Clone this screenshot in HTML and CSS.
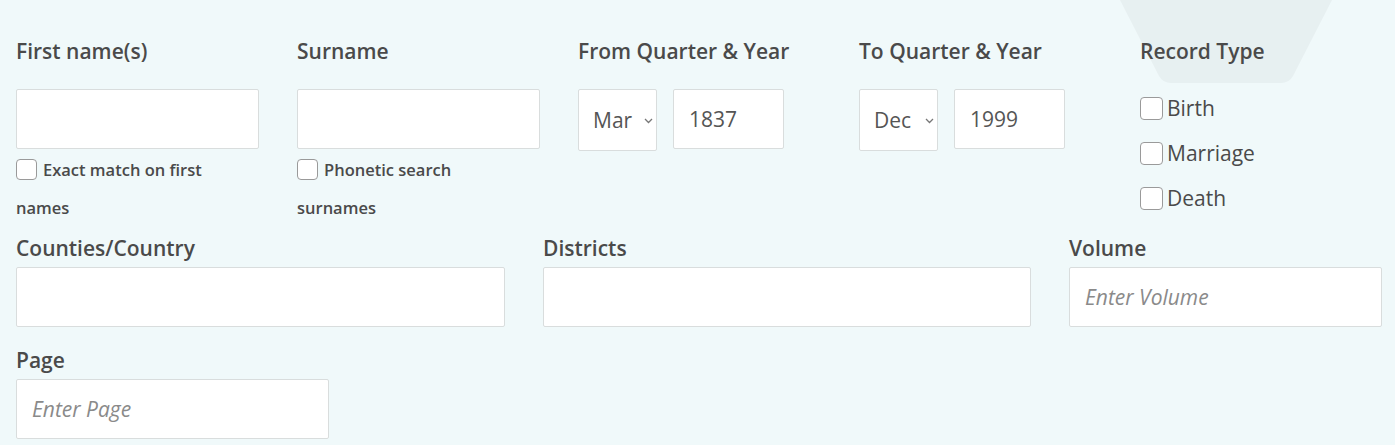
FILE: index.html
```html
<!DOCTYPE html>
<html lang="en">
<head>
    <meta charset="UTF-8">
    <title>Search the Index</title>
    <link rel="stylesheet" href="styles.css">
</head>
<body>
    <svg class="tab" width="212" height="84" viewBox="0 0 212 84">
        <path d="M0 0 H212 L173 76 Q169 83 161 83 H51 Q43 83 39 76 Z" fill="#e7f0f1"/>
    </svg>
    <form class="search">
        <div class="row row-top">
            <div class="field">
                <label class="title" for="forename">First name(s)</label>
                <input type="text" id="forename" class="box">
                <label class="check small"><input type="checkbox">Exact match on first names</label>
            </div>
            <div class="field">
                <label class="title" for="surname">Surname</label>
                <input type="text" id="surname" class="box">
                <label class="check small"><input type="checkbox">Phonetic search surnames</label>
            </div>
            <div class="field">
                <label class="title">From Quarter &amp; Year</label>
                <div class="pair">
                    <div class="pick">
                        <select class="box quarter"><option>Mar</option><option>Jun</option><option>Sep</option><option>Dec</option></select>
                        <svg class="chev" width="9" height="6" viewBox="0 0 9 6"><path d="M1 1 L4.5 4.5 L8 1" fill="none" stroke="#777" stroke-width="1.3"/></svg>
                    </div>
                    <input type="text" class="box year" value="1837">
                </div>
            </div>
            <div class="field">
                <label class="title">To Quarter &amp; Year</label>
                <div class="pair">
                    <div class="pick">
                        <select class="box quarter"><option>Dec</option><option>Mar</option><option>Jun</option><option>Sep</option></select>
                        <svg class="chev" width="9" height="6" viewBox="0 0 9 6"><path d="M1 1 L4.5 4.5 L8 1" fill="none" stroke="#777" stroke-width="1.3"/></svg>
                    </div>
                    <input type="text" class="box year" value="1999">
                </div>
            </div>
            <div class="field">
                <label class="title">Record Type</label>
                <div class="types">
                    <label class="check big"><input type="checkbox">Birth</label>
                    <label class="check big"><input type="checkbox">Marriage</label>
                    <label class="check big"><input type="checkbox">Death</label>
                </div>
            </div>
        </div>
        <div class="row row-mid">
            <div class="field">
                <label class="title" for="county">Counties/Country</label>
                <input type="text" id="county" class="box">
            </div>
            <div class="field">
                <label class="title" for="district">Districts</label>
                <input type="text" id="district" class="box">
            </div>
            <div class="field">
                <label class="title" for="volume">Volume</label>
                <input type="text" id="volume" class="box" placeholder="Enter Volume">
            </div>
        </div>
        <div class="row row-page">
            <div class="field">
                <label class="title" for="page">Page</label>
                <input type="text" id="page" class="box" placeholder="Enter Page">
            </div>
        </div>
    </form>
</body>
</html>
```

FILE: styles.css
```css
body {
    margin: 0;
    background-color: #f0f9fa;
    font-family: "Open Sans", "Noto Sans", sans-serif;
    color: #4a4a4a;
    position: relative;
}

.tab {
    position: absolute;
    left: 1120px;
    top: 0;
    z-index: 0;
}

.search {
    position: relative;
    z-index: 1;
    padding: 36px 0 0 16px;
}

.row {
    display: grid;
    column-gap: 38px;
}

.row-top {
    grid-template-columns: repeat(5, 243px);
}

.row-mid {
    grid-template-columns: 489px 488px 313px;
    margin-top: 6px;
}

.row-page {
    grid-template-columns: 313px;
    margin-top: 18px;
}

.field {
    display: flex;
    flex-direction: column;
    align-items: flex-start;
}

.title {
    display: block;
    font-size: 21px;
    font-weight: 600;
    line-height: 30px;
    margin-bottom: 4px;
}

.row-top .title {
    margin-bottom: 23px;
}

.box {
    box-sizing: border-box;
    width: 100%;
    height: 60px;
    margin: 0;
    background: #fff;
    border: 1px solid #d9dddd;
    border-radius: 2px;
    padding: 0 15px;
    font-family: inherit;
    font-size: 21px;
    color: #555;
    outline: none;
}

.box::placeholder {
    font-style: italic;
    color: #8a8a8a;
}

.pair {
    display: flex;
    gap: 16px;
    align-items: flex-start;
}

.pick {
    position: relative;
}

.quarter {
    -webkit-appearance: none;
    appearance: none;
    width: 79px;
    height: 62px;
    padding: 0 0 0 14px;
}

.chev {
    position: absolute;
    left: 66px;
    top: 29px;
    pointer-events: none;
}

.year {
    width: 111px;
}

.check {
    display: block;
    color: #4a4a4a;
}

.check input {
    -webkit-appearance: none;
    appearance: none;
    box-sizing: border-box;
    margin: 0 6px 0 0;
    background: #fff;
    border: 1.5px solid #9a9a9a;
    border-radius: 4px;
    vertical-align: middle;
    position: relative;
    top: -2px;
}

.small {
    font-size: 16.5px;
    font-weight: 600;
    line-height: 38px;
    width: 230px;
    margin-top: 2px;
}

.small input {
    width: 21px;
    height: 21px;
}

.types {
    margin-top: -3px;
}

.big {
    font-size: 21px;
    line-height: 45px;
}

.big input {
    width: 23px;
    height: 23px;
    margin-right: 4px;
}
```
